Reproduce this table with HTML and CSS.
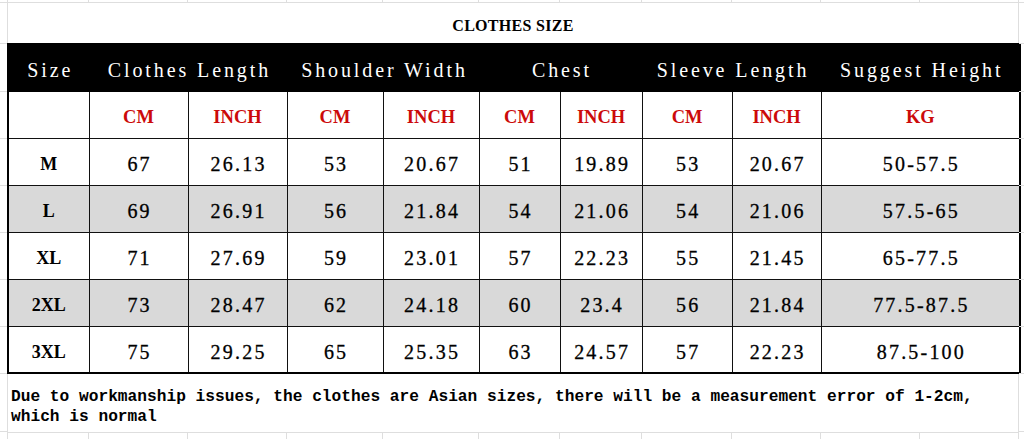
FILE: index.html
```html
<!DOCTYPE html>
<html>
<head>
<meta charset="utf-8">
<link rel="stylesheet" href="styles.css">
</head>
<body>
<div class="sheet">
  <div class="gutter">
    <div class="g g-top"></div>
    <div class="g g-title"></div>
    <div class="g g-head"></div>
    <div class="g g-row"></div>
    <div class="g g-row"></div>
    <div class="g g-row"></div>
    <div class="g g-row"></div>
    <div class="g g-row"></div>
    <div class="g g-row"></div>
    <div class="g g-note"></div>
    <div class="g g-bottom"></div>
  </div>
  <div class="main">
    <div class="strip strip-top">
      <span></span><span></span><span></span><span></span><span></span><span></span><span></span><span></span><span></span><span></span><span></span>
    </div>
    <div class="title">CLOTHES SIZE</div>
    <table class="size-table">
      <colgroup>
        <col class="c-size"><col class="c-99"><col class="c-99"><col class="c-96"><col class="c-96"><col class="c-81"><col class="c-82"><col class="c-90"><col class="c-89"><col class="c-kg">
      </colgroup>
      <tr class="head">
        <th>Size</th>
        <th colspan="2">Clothes Length</th>
        <th colspan="2">Shoulder Width</th>
        <th colspan="2">Chest</th>
        <th colspan="2">Sleeve Length</th>
        <th>Suggest Height</th>
      </tr>
      <tr class="units">
        <td></td>
        <td>CM</td><td>INCH</td>
        <td>CM</td><td>INCH</td>
        <td>CM</td><td>INCH</td>
        <td>CM</td><td>INCH</td>
        <td>KG</td>
      </tr>
      <tr>
        <td class="sz">M</td><td>67</td><td>26.13</td><td>53</td><td>20.67</td><td>51</td><td>19.89</td><td>53</td><td>20.67</td><td>50-57.5</td>
      </tr>
      <tr class="alt">
        <td class="sz">L</td><td>69</td><td>26.91</td><td>56</td><td>21.84</td><td>54</td><td>21.06</td><td>54</td><td>21.06</td><td>57.5-65</td>
      </tr>
      <tr>
        <td class="sz">XL</td><td>71</td><td>27.69</td><td>59</td><td>23.01</td><td>57</td><td>22.23</td><td>55</td><td>21.45</td><td>65-77.5</td>
      </tr>
      <tr class="alt">
        <td class="sz">2XL</td><td>73</td><td>28.47</td><td>62</td><td>24.18</td><td>60</td><td>23.4</td><td>56</td><td>21.84</td><td>77.5-87.5</td>
      </tr>
      <tr>
        <td class="sz">3XL</td><td>75</td><td>29.25</td><td>65</td><td>25.35</td><td>63</td><td>24.57</td><td>57</td><td>22.23</td><td>87.5-100</td>
      </tr>
    </table>
    <div class="note">Due to workmanship issues, the clothes are Asian sizes, there will be a measurement error of 1-2cm,<br>which is normal</div>
    <div class="strip strip-bottom">
      <span></span><span></span><span></span><span></span><span></span><span></span><span></span><span></span><span></span><span></span><span></span>
    </div>
  </div>
  <div class="gutter gutter-right">
    <div class="g g-top"></div>
    <div class="g g-title"></div>
    <div class="g g-head"></div>
    <div class="g g-row"></div>
    <div class="g g-row"></div>
    <div class="g g-row"></div>
    <div class="g g-row"></div>
    <div class="g g-row"></div>
    <div class="g g-row"></div>
    <div class="g g-note"></div>
    <div class="g g-bottom"></div>
  </div>
</div>
</body>
</html>
```

FILE: styles.css
```css
* { box-sizing: border-box; }

html, body {
  margin: 0;
  padding: 0;
  background: #ffffff;
}

body {
  font-family: "Liberation Serif", "DejaVu Serif", serif;
  color: #000;
  overflow: hidden;
}

.sheet {
  display: flex;
  width: 1024px;
  height: 439px;
}

/* spreadsheet gutters */
.gutter {
  width: 7px;
  display: flex;
  flex-direction: column;
  flex: none;
}
.gutter-right {
  width: 5px;
}
.g {
  border-bottom: 1px solid #dedede;
  flex: none;
}
.g-top { height: 3px; }
.g-title { height: 41px; }
.g-head { height: 48px; }
.g-row { height: 47px; }
.g-note { height: 58px; }
.g-bottom { height: 7px; border-bottom: none; }

.main {
  width: 1012px;
  flex: none;
  display: flex;
  flex-direction: column;
}

.strip {
  display: flex;
  border-left: 1px solid #dedede;
}
.strip span {
  flex: none;
  border-right: 1px solid #dedede;
  height: 100%;
}
.strip span:nth-child(1) { width: 81px; }
.strip span:nth-child(2) { width: 99px; }
.strip span:nth-child(3) { width: 99px; }
.strip span:nth-child(4) { width: 96px; }
.strip span:nth-child(5) { width: 96px; }
.strip span:nth-child(6) { width: 81px; }
.strip span:nth-child(7) { width: 82px; }
.strip span:nth-child(8) { width: 90px; }
.strip span:nth-child(9) { width: 89px; }
.strip span:nth-child(10) { width: 99px; }
.strip span:nth-child(11) { width: 99px; }

.strip-top {
  height: 3px;
  border-bottom: 1px solid #dedede;
}
.strip-bottom {
  height: 7px;
  border-top: 1px solid #dedede;
}

.title {
  height: 40px;
  display: flex;
  align-items: center;
  justify-content: center;
  padding-top: 5px;
  font-weight: bold;
  font-size: 16px;
  letter-spacing: 0.3px;
  border-left: 1px solid #dedede;
  border-right: 1px solid #dedede;
}

.size-table {
  border-collapse: collapse;
  table-layout: fixed;
  width: 1012px;
  border: 2px solid #000;
}

.c-size { width: 81px; }
.c-99 { width: 99px; }
.c-96 { width: 96px; }
.c-81 { width: 81px; }
.c-82 { width: 82px; }
.c-90 { width: 90px; }
.c-89 { width: 89px; }
.c-kg { width: 199px; }

.size-table th,
.size-table td {
  border: 1px solid #111;
  padding: 6px 0 0 0;
  text-align: center;
  vertical-align: middle;
  white-space: nowrap;
}

.size-table tr { height: 47px; }

.head { height: 49px; }
.head th {
  background: #000;
  color: #fff;
  border-color: #000;
  font-weight: normal;
  font-size: 20px;
  letter-spacing: 2.9px;
  text-indent: 2.9px;
  padding-top: 5px;
}

.size-table td {
  font-size: 20px;
  letter-spacing: 2.2px;
  text-indent: 2.2px;
  -webkit-text-stroke: 0.3px #000;
}

.size-table td.sz {
  font-weight: bold;
  font-size: 18px;
  letter-spacing: 0;
  text-indent: 0;
  -webkit-text-stroke: 0;
}

.units td {
  color: #cc0a0a;
  font-weight: bold;
  font-size: 18.5px;
  letter-spacing: 0;
  text-indent: 0;
  -webkit-text-stroke: 0;
  padding-top: 6px;
}

.alt td {
  background: #d9d9d9;
}

.note {
  height: 58px;
  padding: 13px 0 0 3px;
  font-family: "Liberation Mono", "DejaVu Sans Mono", monospace;
  font-size: 16.2px;
  line-height: 20px;
  font-weight: bold;
  white-space: nowrap;
  border-left: 1px solid #dedede;
  border-right: 1px solid #dedede;
}
```
